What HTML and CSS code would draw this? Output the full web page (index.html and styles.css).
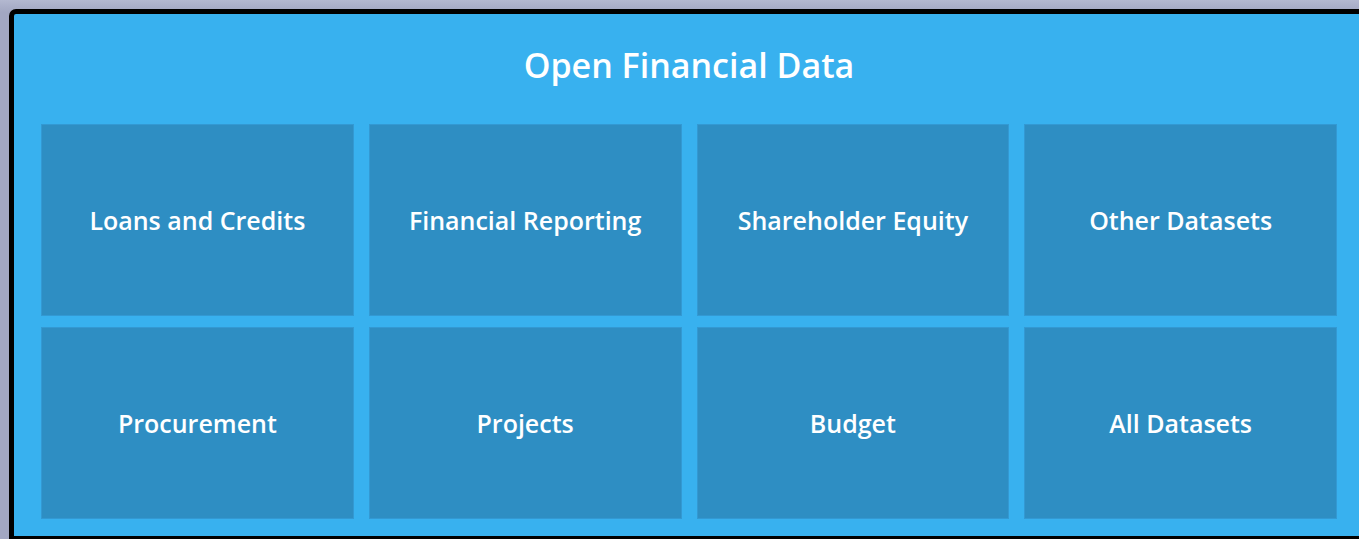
FILE: index.html
```html
<!DOCTYPE html>
<html lang="en">
<head>
<meta charset="utf-8">
<title>Open Financial Data</title>
<link rel="stylesheet" href="styles.css">
</head>
<body>
<div class="frame">
  <h1 class="title">Open Financial Data</h1>
  <div class="grid">
    <a class="tile" href="#">Loans and Credits</a>
    <a class="tile" href="#">Financial Reporting</a>
    <a class="tile" href="#">Shareholder Equity</a>
    <a class="tile" href="#">Other Datasets</a>
    <a class="tile" href="#">Procurement</a>
    <a class="tile" href="#">Projects</a>
    <a class="tile" href="#">Budget</a>
    <a class="tile" href="#">All Datasets</a>
  </div>
</div>
</body>
</html>
```
FILE: styles.css
```css
html, body {
  margin: 0;
  padding: 0;
  overflow: hidden;
  height: 100%;
}
body {
  background: linear-gradient(180deg, #b3b8d0 0px, #a2a7c2 12px, #a2a7c2 100%);
  font-family: "Open Sans", "Liberation Sans", sans-serif;
}
.frame {
  margin: 9px 0 0 9px;
  border: 5px solid #000;
  border-radius: 7px 7px 0 0;
  background: #38b1ef;
  box-sizing: content-box;
  padding: 0 27px 17px;
  width: 1296px;
}
.title {
  margin: 0;
  height: 110px;
  display: flex;
  align-items: center;
  justify-content: center;
  color: #fff;
  font-size: 34px;
  font-weight: 600;
  padding-bottom: 8px;
  box-sizing: border-box;
}
.grid {
  display: grid;
  grid-template-columns: repeat(4, 1fr);
  grid-auto-rows: 192px;
  column-gap: 15px;
  row-gap: 11px;
}
.tile {
  display: flex;
  align-items: center;
  justify-content: center;
  background: #2e8ec3;
  border: 1px solid #3399d3;
  color: #fff;
  text-decoration: none;
  font-size: 25px;
  font-weight: 600;
  box-sizing: border-box;
}
```
